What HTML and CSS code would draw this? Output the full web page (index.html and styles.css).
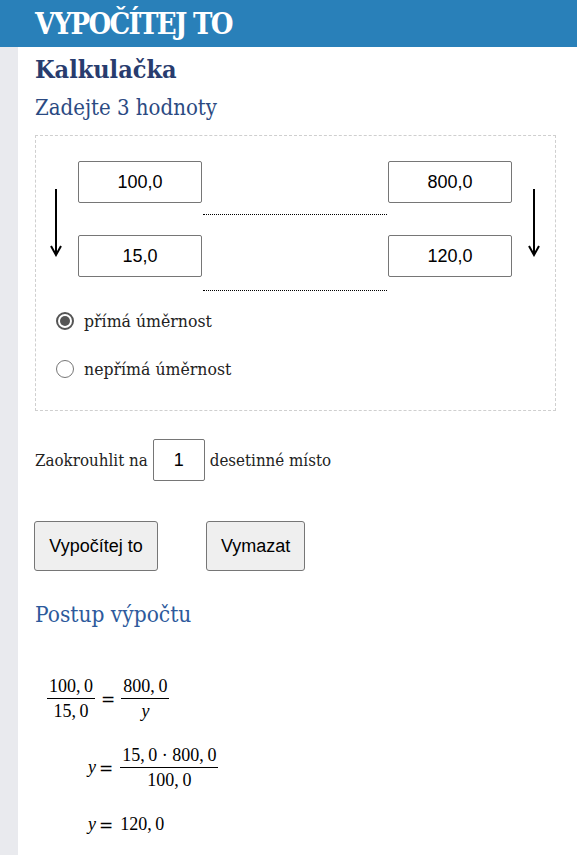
FILE: index.html
```html
<!DOCTYPE html>
<html lang="cs">
<head>
<meta charset="utf-8">
<title>Vypočítej to</title>
<link rel="stylesheet" href="styles.css">
</head>
<body>
<header class="topbar"><h1 class="brand">VYPOČÍTEJ TO</h1></header>
<div class="page">
  <div class="strip"></div>
  <main class="content">
    <h2 class="title">Kalkulačka</h2>
    <h3 class="subtitle">Zadejte 3 hodnoty</h3>
    <div class="box">
      <div class="grid">
        <div class="arrow arrow-left">
          <svg width="12" height="68" viewBox="0 0 12 68"><path d="M6 0 V66 M1 57 L6 66 L11 57" fill="none" stroke="#000" stroke-width="2"/></svg>
        </div>
        <input class="num a1" type="text" value="100,0">
        <div class="dots d1"></div>
        <input class="num b1" type="text" value="800,0">
        <input class="num a2" type="text" value="15,0">
        <div class="dots d2"></div>
        <input class="num b2" type="text" value="120,0">
        <div class="arrow arrow-right">
          <svg width="12" height="68" viewBox="0 0 12 68"><path d="M6 0 V66 M1 57 L6 66 L11 57" fill="none" stroke="#000" stroke-width="2"/></svg>
        </div>
      </div>
      <div class="radios">
        <label class="opt"><input class="radio" type="radio" name="u" checked> přímá úměrnost</label>
        <label class="opt"><input class="radio" type="radio" name="u"> nepřímá úměrnost</label>
      </div>
    </div>
    <div class="round">Zaokrouhlit na <input class="dec" type="text" value="1"> desetinné místo</div>
    <div class="buttons">
      <button class="btn btn-calc" type="button">Vypočítej to</button>
      <button class="btn btn-clear" type="button">Vymazat</button>
    </div>
    <h3 class="steps">Postup výpočtu</h3>
    <div class="math">
      <div class="mrow r1">
        <span class="frac"><span class="fn">100,&#8201;0</span><span class="fd">15,&#8201;0</span></span>
        <span class="op">=</span>
        <span class="frac"><span class="fn">800,&#8201;0</span><span class="fd"><i>y</i></span></span>
      </div>
      <div class="mrow r2">
        <i>y</i><span class="op">=</span>
        <span class="frac"><span class="fn">15,&#8201;0 · 800,&#8201;0</span><span class="fd">100,&#8201;0</span></span>
      </div>
      <div class="mrow r3">
        <i>y</i><span class="op">=</span><span>120,&#8201;0</span>
      </div>
    </div>
  </main>
</div>
</body>
</html>
```

FILE: styles.css
```css
* { box-sizing: border-box; }
html, body { margin: 0; padding: 0; }
body {
  font-family: "DejaVu Serif", serif;
  color: #222;
  background: #fff;
  width: 577px;
  min-height: 855px;
}
.topbar {
  background: #2980b9;
  height: 47px;
  padding-left: 35px;
  display: flex;
  align-items: center;
}
.brand {
  margin: 0;
  color: #fff;
  font-size: 29px;
  font-weight: bold;
  font-stretch: condensed;
  letter-spacing: -1.7px;
}
.page {
  display: flex;
  min-height: 808px;
}
.strip {
  width: 18px;
  background: #e9eaee;
  flex: none;
}
.content {
  flex: 1;
  padding-left: 17px;
  padding-right: 21px;
}
.title {
  margin: 8px 0 0;
  font-size: 25px;
  font-weight: bold;
  font-stretch: condensed;
  color: #283c6e;
  line-height: 30px;
}
.subtitle {
  margin: 10px 0 0;
  font-size: 22px;
  font-weight: normal;
  font-stretch: condensed;
  color: #2b4a82;
  line-height: 26px;
}
.box {
  margin-top: 14px;
  border: 1px dashed #cfcfcf;
  height: 276px;
  padding-top: 25px;
}
.grid {
  display: grid;
  grid-template-columns: 42px 124px 1fr 124px 43px;
  grid-template-rows: 42px 32px 42px;
}
.num {
  width: 124px;
  height: 42px;
  border: 1px solid #767676;
  border-radius: 2px;
  font-family: "Liberation Sans", Arial, sans-serif;
  font-size: 18px;
  text-align: center;
  color: #000;
  padding: 0;
  background: #fff;
}
.a1 { grid-column: 2; grid-row: 1; }
.b1 { grid-column: 4; grid-row: 1; }
.a2 { grid-column: 2; grid-row: 3; }
.b2 { grid-column: 4; grid-row: 3; }
.dots {
  grid-column: 3;
  border-top: 1px dotted #000;
  height: 0;
  margin: 0 1px;
}
.d1 { grid-row: 2; margin-top: 11px; }
.d2 { grid-row: 4; margin-top: 13px; }
.arrow {
  grid-row: 1 / 4;
  display: flex;
  padding-top: 28px;
}
.arrow-left { grid-column: 1; padding-left: 14px; }
.arrow-right { grid-column: 5; padding-left: 16px; }
.radios {
  margin-top: 19px;
  padding-left: 20px;
  display: flex;
  flex-direction: column;
  gap: 26px;
}
.opt {
  display: flex;
  align-items: center;
  gap: 10px;
  font-size: 17.5px;
  font-stretch: condensed;
  height: 22px;
}
.radio {
  appearance: none;
  -webkit-appearance: none;
  margin: 0;
  width: 18px;
  height: 18px;
  border: 1px solid #767676;
  border-radius: 50%;
  background: #fff;
  display: grid;
  place-items: center;
}
.radio:checked { border: 2px solid #555; }
.radio:checked::before {
  content: "";
  width: 10px;
  height: 10px;
  border-radius: 50%;
  background: #555;
}
.round {
  margin-top: 28px;
  display: flex;
  align-items: center;
  gap: 5px;
  font-size: 16.8px;
  font-stretch: condensed;
}
.dec {
  width: 52px;
  height: 42px;
  border: 1px solid #767676;
  border-radius: 2px;
  font-family: "Liberation Sans", Arial, sans-serif;
  font-size: 18px;
  text-align: center;
  padding: 0;
}
.buttons {
  margin-top: 40px;
  margin-left: -1px;
  display: flex;
  gap: 48px;
}
.btn {
  height: 50px;
  padding: 0 14px;
  border: 1px solid #767676;
  border-radius: 3px;
  background: #efefef;
  font-family: "Liberation Sans", Arial, sans-serif;
  font-size: 18px;
  color: #000;
}
.btn-calc { width: 124px; }
.btn-clear { width: 99px; }
.steps {
  margin: 29px 0 0;
  font-size: 22.5px;
  font-weight: normal;
  font-stretch: condensed;
  color: #2d5a9c;
  line-height: 28px;
}
.math {
  margin-top: 48px;
  font-family: "Liberation Serif", serif;
  font-size: 18px;
  color: #000;
  display: flex;
  flex-direction: column;
  gap: 24px;
}
.mrow {
  display: flex;
  align-items: center;
}
.r1 { padding-left: 12px; }
.r2, .r3 { padding-left: 53px; }
.op {
  font-family: "DejaVu Sans", sans-serif;
  font-size: 17px;
  margin: 0 7px 0 3px;
}
.r1 .op { margin: 0 6px; }
.frac {
  display: inline-flex;
  flex-direction: column;
  align-items: center;
}
.fn { padding: 0 2px 2px; border-bottom: 1px solid #000; line-height: 20px; }
.fd { padding: 2px 2px 0; line-height: 20px; }
```
